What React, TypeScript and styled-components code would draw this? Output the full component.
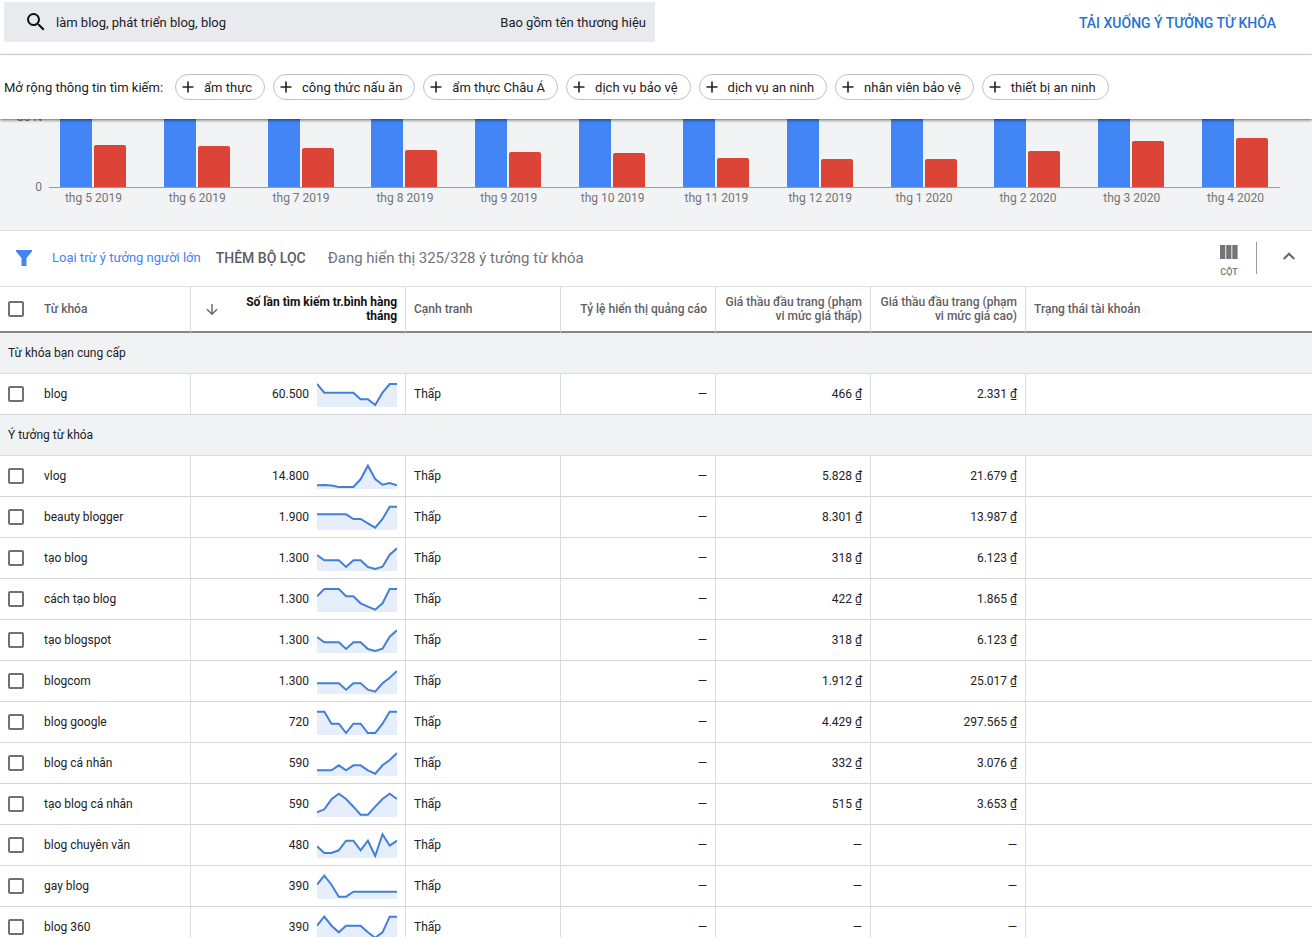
import React from "react";
import styled, { createGlobalStyle } from "styled-components";

const Global = createGlobalStyle`
  * { box-sizing: border-box; }
  body { margin: 0; background: #fff; color: #212124; font-family: Roboto, "Noto Sans", sans-serif; font-size: 13px; }
  button, input { font: inherit; color: inherit; }
  button { background: none; border: 0; padding: 0; cursor: pointer; white-space: nowrap; }
`;

const Page = styled.div`
  height: 100vh;
  overflow: hidden;
`;

const TopBar = styled.header`
  display: flex;
  align-items: center;
  justify-content: space-between;
  height: 55px;
  padding: 2px 36px 13px 4px;
  border-bottom: 1px solid #dfe0e2;
`;

const SearchBox = styled.form`
  display: flex;
  flex: 0 1 651px;
  align-items: center;
  height: 40px;
  padding: 0 9px 0 20px;
  background: #e9eaee;
`;

const SearchInput = styled.input`
  flex: 1;
  min-width: 0;
  height: 24px;
  margin-left: 8px;
  padding: 2px 0 0;
  border: 0;
  outline: 0;
  background: none;
`;

const BrandButton = styled.button`
  padding-top: 2px;
`;

const Download = styled.a`
  padding-top: 2px;
  color: #2673d1;
  font-size: 14px;
  font-weight: 500;
  line-height: 20px;
  text-decoration: none;
`;

const ExpandBar = styled.section`
  position: relative;
  z-index: 1;
  display: flex;
  align-items: center;
  height: 64px;
  padding: 0 4px;
  background: #fff;
  box-shadow: 0 1px 3px rgba(0, 0, 0, 0.6);
`;

const Chips = styled.div`
  display: flex;
  gap: 8px;
  margin-left: 12px;
`;

const Chip = styled.button`
  display: flex;
  align-items: center;
  gap: 10px;
  height: 26px;
  padding: 0 12px 0 6px;
  border: 1px solid #bfc1c5;
  border-radius: 13px;
`;

const ChartPanel = styled.section`
  position: relative;
  height: 112px;
  overflow: hidden;
  background: #f1f3f4;
  border-bottom: 1px solid #dfe0e2;
  color: #757578;
  font-size: 12px;
  line-height: 14px;
`;

const AxisValue = styled.span<{ $top: number }>`
  position: absolute;
  top: ${(p) => p.$top}px;
  left: 0;
  width: 42px;
  text-align: right;
`;

const Months = styled.div`
  display: grid;
  grid-template-columns: repeat(12, 1fr);
  padding: 0 25px 0 41px;
`;

const Bars = styled.div`
  display: flex;
  align-items: flex-end;
  justify-content: center;
  gap: 2px;
  height: 68px;
`;

const Bar = styled.span<{ $color: string; $height: number }>`
  width: 32px;
  height: ${(p) => p.$height}px;
  border-radius: 2px 2px 0 0;
  background: ${(p) => p.$color};
`;

const AxisLine = styled.div`
  height: 1px;
  margin: 0 32px 0 49px;
  background: #9b9ca0;
`;

const MonthLabel = styled.span`
  padding: 3px 0 0 1px;
  text-align: center;
`;

const FilterBar = styled.section`
  display: flex;
  align-items: center;
  height: 55px;
  padding: 0 13px 2px 14px;
`;

const FilterLink = styled.button`
  margin-left: 18px;
  color: #4284f4;
`;

const AddFilter = styled.button`
  margin-left: 15px;
  color: #5c5d61;
  font-size: 14px;
  font-weight: 500;
`;

const Showing = styled.span`
  margin-left: 22px;
  color: #727377;
  font-size: 15px;
`;

const Tools = styled.div`
  display: flex;
  align-items: center;
  margin-left: auto;
`;

const ColumnsButton = styled.button`
  display: flex;
  flex-direction: column;
  align-items: center;
  gap: 8px;
  padding: 7px 18px 0 0;
  color: #757575;
  font-size: 9px;
  font-weight: 500;
  line-height: 10px;
`;

const Divider = styled.span`
  width: 1px;
  height: 32px;
  margin-right: 22px;
  background: #9b9b9b;
`;

const Table = styled.table`
  width: 100%;
  table-layout: fixed;
  border-collapse: separate;
  border-spacing: 0;
  font-size: 12px;
`;

const Head = styled.th<{ $right?: boolean; $active?: boolean }>`
  height: 47px;
  padding: 0 8px;
  border-top: 1px solid #dfe0e2;
  border-bottom: 2px solid #85868c;
  color: ${(p) => (p.$active ? "#111" : "#5f6065")};
  font-weight: ${(p) => (p.$active ? 700 : 500)};
  line-height: 14px;
  text-align: ${(p) => (p.$right ? "right" : "left")};
  & + & { border-left: 1px solid #dadbdd; }
`;

const Cell = styled.td<{ $right?: boolean }>`
  height: 41px;
  padding: 0 8px;
  border-bottom: 1px solid #d4d5d8;
  text-align: ${(p) => (p.$right ? "right" : "left")};
  & + & { border-left: 1px solid #dadbdd; }
`;

const GroupCell = styled.th`
  height: 41px;
  padding: 0 8px;
  border-bottom: 1px solid #dadbdd;
  background: #f1f2f4;
  font-weight: 400;
  text-align: left;
`;

const KeywordLabel = styled.label`
  display: flex;
  align-items: center;
  gap: 20px;
`;

const Tick = styled.input`
  appearance: none;
  width: 16px;
  height: 16px;
  margin: 0;
  border: 2px solid #707175;
  border-radius: 2px;
  background: #fff;
  &:checked { background: #4284f4; }
`;

const SortHead = styled.div`
  display: flex;
  align-items: center;
  justify-content: space-between;
  padding-left: 6px;
`;

const SortText = styled.span`
  width: 156px;
`;

const Volume = styled.div`
  display: flex;
  align-items: center;
  justify-content: flex-end;
  gap: 8px;
`;

const months: [string, number][] = [
  ["thg 5 2019", 42], ["thg 6 2019", 41], ["thg 7 2019", 39], ["thg 8 2019", 37],
  ["thg 9 2019", 35], ["thg 10 2019", 34], ["thg 11 2019", 29], ["thg 12 2019", 28],
  ["thg 1 2020", 28], ["thg 2 2020", 36], ["thg 3 2020", 46], ["thg 4 2020", 49],
];

const chips = ["ẩm thực", "công thức nấu ăn", "ẩm thực Châu Á", "dịch vụ bảo vệ", "dịch vụ an ninh", "nhân viên bảo vệ", "thiết bị an ninh"];

interface Keyword {
  name: string;
  volume: string;
  low: string;
  high: string;
  trend: number[];
}

const dip = [10, 15.3, 15.3, 15.3, 22, 15.3, 15.3, 22, 24, 21.7, 9.7, 3.3];

const provided: Keyword[] = [
  { name: "blog", volume: "60.500", low: "466 ₫", high: "2.331 ₫", trend: [3, 11.7, 11.7, 11.7, 11.7, 11.7, 18.3, 18.3, 24, 11.7, 3, 3] },
];

const ideas: Keyword[] = [
  { name: "vlog", volume: "14.800", low: "5.828 ₫", high: "21.679 ₫", trend: [22.3, 22, 22.5, 24, 24, 24, 16.3, 2.7, 16, 21.7, 20, 22.3] },
  { name: "beauty blogger", volume: "1.900", low: "8.301 ₫", high: "13.987 ₫", trend: [10.3, 10.3, 10.3, 10.3, 10.3, 15, 15, 19.3, 23.7, 15, 2.7, 2.7] },
  { name: "tạo blog", volume: "1.300", low: "318 ₫", high: "6.123 ₫", trend: dip },
  { name: "cách tạo blog", volume: "1.300", low: "422 ₫", high: "1.865 ₫", trend: [10.3, 3, 3, 3, 10.3, 10.3, 17.3, 20.7, 23.7, 17.3, 3, 3] },
  { name: "tạo blogspot", volume: "1.300", low: "318 ₫", high: "6.123 ₫", trend: dip },
  { name: "blogcom", volume: "1.300", low: "1.912 ₫", high: "25.017 ₫", trend: [15.3, 15.3, 15.3, 15.3, 21.7, 15.3, 15.3, 21.7, 23.7, 15.3, 9.7, 3] },
  { name: "blog google", volume: "720", low: "4.429 ₫", high: "297.565 ₫", trend: [2.7, 2.7, 14.7, 14.7, 24, 14.7, 14.7, 24, 24, 14.7, 2.7, 2.7] },
  { name: "blog cá nhân", volume: "590", low: "332 ₫", high: "3.076 ₫", trend: [20.3, 20.3, 20.3, 15.3, 20.3, 15.3, 15.3, 20.3, 23.7, 15.3, 10, 3] },
  { name: "tạo blog cá nhân", volume: "590", low: "515 ₫", high: "3.653 ₫", trend: [21.3, 18.3, 8.3, 2.7, 8, 15.7, 23.7, 23.7, 15.7, 8, 2.7, 8] },
  { name: "blog chuyên văn", volume: "480", low: "—", high: "—", trend: [14.3, 21, 21, 18.3, 8.7, 8.7, 18.3, 8.7, 24, 2.3, 13.7, 8.7] },
  { name: "gay blog", volume: "390", low: "—", high: "—", trend: [11.7, 2.7, 11.7, 23.7, 23.7, 18.7, 18.7, 18.7, 18.7, 18.7, 18.7, 18.7] },
  { name: "blog 360", volume: "390", low: "—", high: "—", trend: [11.7, 2.7, 11.7, 18.3, 11.7, 11.7, 11.7, 18.3, 23.7, 18.3, 2.7, 2.7] },
];

function Sparkline({ trend }: { trend: number[] }) {
  const points = trend.map((y, i) => `${((i * 80) / 11).toFixed(1)},${y}`).join(" ");
  return (
    <svg width="80" height="26" viewBox="0 0 80 26" aria-hidden="true">
      <polygon points={`0,26 ${points} 80,26`} fill="#e6eefb" />
      <polyline points={points} fill="none" stroke="#437fd5" strokeWidth="2" />
    </svg>
  );
}

function KeywordRow({ item }: { item: Keyword }) {
  return (
    <tr>
      <Cell><KeywordLabel><Tick type="checkbox" />{item.name}</KeywordLabel></Cell>
      <Cell $right><Volume>{item.volume}<Sparkline trend={item.trend} /></Volume></Cell>
      <Cell>Thấp</Cell>
      <Cell $right>—</Cell>
      <Cell $right>{item.low}</Cell>
      <Cell $right>{item.high}</Cell>
      <Cell />
    </tr>
  );
}

export default function App() {
  return (
    <Page>
      <Global />
      <TopBar>
        <SearchBox>
          <svg width="24" height="24" viewBox="0 0 24 24" fill="#111" aria-hidden="true">
            <path d="M15.5 14h-.79l-.28-.27A6.47 6.47 0 0 0 16 9.5 6.5 6.5 0 1 0 9.5 16c1.61 0 3.09-.59 4.23-1.57l.27.28v.79l5 4.99L20.49 19l-4.99-5zm-6 0C7.01 14 5 11.99 5 9.5S7.01 5 9.5 5 14 7.01 14 9.5 11.99 14 9.5 14z" />
          </svg>
          <SearchInput aria-label="Từ khóa" defaultValue="làm blog, phát triển blog, blog" />
          <BrandButton type="button">Bao gồm tên thương hiệu</BrandButton>
        </SearchBox>
        <Download href="#">TẢI XUỐNG Ý TƯỞNG TỪ KHÓA</Download>
      </TopBar>
      <ExpandBar>
        <span>Mở rộng thông tin tìm kiếm:</span>
        <Chips>
          {chips.map((c) => (
            <Chip key={c} type="button">
              <svg width="12" height="12" viewBox="0 0 12 12" stroke="#222" strokeWidth="1.6" aria-hidden="true"><path d="M6 .5v11M.5 6h11" /></svg>
              {c}
            </Chip>
          ))}
        </Chips>
      </ExpandBar>
      <ChartPanel>
        <AxisValue $top={-9}>80 N</AxisValue>
        <AxisValue $top={61}>0</AxisValue>
        <Months>
          {months.map(([m, h]) => (
            <Bars key={m}><Bar $color="#4285f4" $height={72} /><Bar $color="#db4437" $height={h} /></Bars>
          ))}
        </Months>
        <AxisLine />
        <Months>{months.map(([m]) => <MonthLabel key={m}>{m}</MonthLabel>)}</Months>
      </ChartPanel>
      <FilterBar>
        <svg width="20" height="20" viewBox="0 0 20 20" fill="#4284f4" aria-hidden="true">
          <path d="M2 2h16v1.5L12.5 10v8h-5v-8L2 3.5z" />
        </svg>
        <FilterLink type="button">Loại trừ ý tưởng người lớn</FilterLink>
        <AddFilter type="button">THÊM BỘ LỌC</AddFilter>
        <Showing>Đang hiển thị 325/328 ý tưởng từ khóa</Showing>
        <Tools>
          <ColumnsButton type="button">
            <svg width="18" height="14" viewBox="0 0 18 14" fill="#757575" aria-hidden="true"><path d="M0 0h5.3v14H0zM6.2 0h5.2v14H6.2zM12.3 0h5.3v14h-5.3z" /></svg>
            CỘT
          </ColumnsButton>
          <Divider />
          <button type="button" aria-label="Thu gọn">
            <svg width="20" height="20" viewBox="0 0 20 20" fill="none" stroke="#666" strokeWidth="2" aria-hidden="true"><path d="m4.7 13 5.3-5.3 5.3 5.3" /></svg>
          </button>
        </Tools>
      </FilterBar>
      <Table>
        <colgroup>
          <col width="190" /><col width="215" /><col width="155" /><col width="155" /><col width="155" /><col width="155" /><col />
        </colgroup>
        <thead>
          <tr>
            <Head><KeywordLabel><Tick type="checkbox" />Từ khóa</KeywordLabel></Head>
            <Head $right $active>
              <SortHead>
                <svg width="14" height="14" viewBox="0 0 14 14" fill="none" stroke="#666" strokeWidth="1.4" aria-hidden="true"><path d="M7 2v10M2 7.2l5 5 5-5" /></svg>
                <SortText>Số lần tìm kiếm tr.bình hàng tháng</SortText>
              </SortHead>
            </Head>
            <Head>Cạnh tranh</Head>
            <Head $right>Tỷ lệ hiển thị quảng cáo</Head>
            <Head $right>Giá thầu đầu trang (phạm vi mức giá thấp)</Head>
            <Head $right>Giá thầu đầu trang (phạm vi mức giá cao)</Head>
            <Head>Trạng thái tài khoản</Head>
          </tr>
        </thead>
        <tbody>
          <tr><GroupCell colSpan={7}>Từ khóa bạn cung cấp</GroupCell></tr>
          {provided.map((k) => <KeywordRow key={k.name} item={k} />)}
          <tr><GroupCell colSpan={7}>Ý tưởng từ khóa</GroupCell></tr>
          {ideas.map((k) => <KeywordRow key={k.name} item={k} />)}
        </tbody>
      </Table>
    </Page>
  );
}
